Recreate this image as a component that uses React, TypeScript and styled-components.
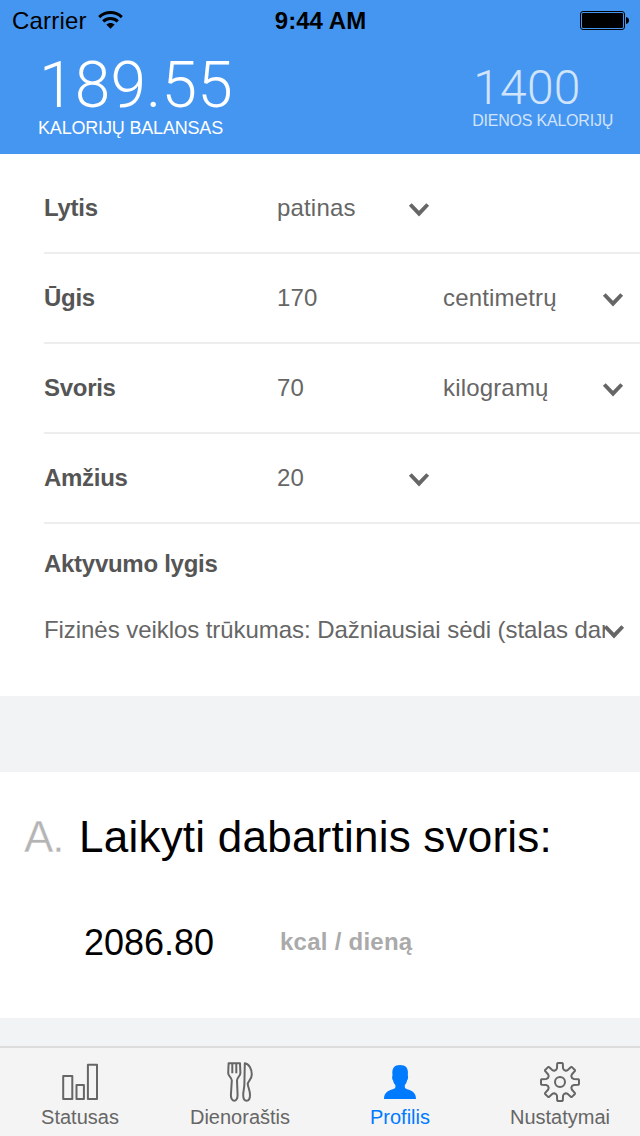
import React from "react";
import styled, { createGlobalStyle } from "styled-components";

const GlobalStyle = createGlobalStyle`
  *, *::before, *::after { box-sizing: border-box; }
  body { margin: 0; background: #f2f3f5; }
`;

const Screen = styled.div`
  display: flex;
  flex-direction: column;
  width: 640px;
  height: 1136px;
  overflow: hidden;
  background: #f2f3f5;
  font-family: "Liberation Sans", Arial, sans-serif;
  color: #666;
`;

const Header = styled.header`
  height: 154px;
  background: #4596f1;
  color: #fff;
`;

const StatusBar = styled.div`
  display: grid;
  grid-template-columns: 1fr auto 1fr;
  align-items: center;
  height: 41px;
  padding: 0 11px 0 12px;
  color: #000;
  font-size: 24px;
  line-height: 40px;
`;

const Carrier = styled.div`
  display: flex;
  align-items: center;
  gap: 11px;
  letter-spacing: 0.2px;
  padding-top: 1px;
`;

const WifiIcon = styled.svg`
  margin-bottom: 2px;
`;

const Clock = styled.div`
  font-weight: 700;
  letter-spacing: 0.05px;
  padding-top: 1px;
`;

const BatteryIcon = styled.svg`
  justify-self: end;
`;

const Totals = styled.div`
  display: flex;
  justify-content: space-between;
  padding: 12px 27px 0 38px;
`;

const Total = styled.div<{ $minor?: boolean }>`
  padding-top: ${(p) => (p.$minor ? 10 : 0)}px;
  opacity: ${(p) => (p.$minor ? 0.75 : 1)};
`;

const TotalValue = styled.div<{ $size: number; $line: number }>`
  padding-left: 1px;
  font-family: Roboto, "Liberation Sans", sans-serif;
  font-size: ${(p) => p.$size}px;
  font-weight: 300;
  line-height: ${(p) => p.$line}px;
  letter-spacing: 0.2px;
`;

const TotalLabel = styled.div<{ $size: number; $line: number; $spacing: number }>`
  font-size: ${(p) => p.$size}px;
  line-height: ${(p) => p.$line}px;
  letter-spacing: ${(p) => p.$spacing}px;
  white-space: nowrap;
`;

const Form = styled.section`
  height: 542px;
  padding: 10px 0 0 44px;
  background: #fff;
  font-size: 24px;
`;

const Row = styled.div`
  display: grid;
  grid-template-columns: 233px 132px 34px 160px 1fr;
  align-items: center;
  height: 90px;
  border-bottom: 2px solid #ededed;
  line-height: 30px;
`;

const FieldName = styled.div`
  color: #555;
  font-weight: 700;
  letter-spacing: -0.28px;
`;

const FieldValue = styled.div`
  letter-spacing: 0.17px;
`;

const Arrow = styled.svg`
  display: block;
  flex: none;
  margin-top: 3px;
  overflow: visible;
`;

const Activity = styled.div`
  padding-top: 25px;
  line-height: 30px;
`;

const ActivitySelect = styled.div`
  display: flex;
  align-items: center;
  margin-top: 36px;
`;

const ActivityText = styled.div`
  width: 561px;
  margin-right: -1px;
  overflow: hidden;
  letter-spacing: -0.06px;
  white-space: nowrap;
`;

const Goal = styled.section`
  height: 246px;
  margin-top: 76px;
  padding: 40px 24px 0;
  background: #fff;
`;

const GoalTitle = styled.h2`
  display: flex;
  margin: 0;
  color: #000;
  font-size: 44px;
  font-weight: 400;
  line-height: 50px;
  white-space: nowrap;
`;

const GoalLetter = styled.span`
  width: 55px;
  color: #b4b4b4;
  letter-spacing: -1px;
  -webkit-text-stroke: 0.4px #fff;
`;

const GoalText = styled.span`
  letter-spacing: 0.23px;
`;

const GoalResult = styled.div`
  display: flex;
  align-items: center;
  margin-top: 59px;
  padding-left: 60px;
  line-height: 42px;
`;

const Kcal = styled.div`
  width: 196px;
  color: #000;
  font-size: 36px;
`;

const Unit = styled.div`
  padding-bottom: 2px;
  color: #aaa;
  font-size: 24px;
  font-weight: 700;
  letter-spacing: 0.25px;
`;

const TabBar = styled.nav`
  display: flex;
  height: 90px;
  margin-top: auto;
  border-top: 2px solid #dcdcdc;
  background: #f4f4f4;
`;

const Tab = styled.div<{ $active?: boolean }>`
  display: flex;
  flex: 1;
  flex-direction: column;
  align-items: center;
  padding-top: 14px;
  color: ${(p) => (p.$active ? "#007aff" : "#666")};
  font-size: 20px;
  line-height: 24px;
`;

const TabLabel = styled.span`
  margin-top: 3px;
`;

const Icon = ({ children }: { children: React.ReactNode }) => (
  <svg width="40" height="40" viewBox="0 0 40 40" fill="none" stroke="currentColor" strokeWidth="2" strokeLinejoin="round">
    {children}
  </svg>
);

const Chevron = () => (
  <Arrow width="20" height="14" viewBox="0 0 20 14" fill="none" stroke="#666" strokeWidth="3.9">
    <path d="M1.3 1.5 10 10.6 18.7 1.5" />
  </Arrow>
);

/* Closed outline of the eight-toothed settings gear. */
const gearPath = (() => {
  const pts: string[] = [];
  for (let i = 0; i < 8; i++) {
    const base = (i * Math.PI) / 4 - Math.PI / 2;
    [
      [12.7, -0.31],
      [14, -0.22],
      [18.6, -0.15],
      [19.1, -0.11],
      [19.1, 0.11],
      [18.6, 0.15],
      [14, 0.22],
      [12.7, 0.31],
    ].forEach(([r, a]) => {
      pts.push(`${(20 + r * Math.cos(base + a)).toFixed(2)} ${(20 + r * Math.sin(base + a)).toFixed(2)}`);
    });
  }
  return `M${pts.join("L")}Z`;
})();

export default function App() {
  return (
    <Screen>
      <GlobalStyle />
      <Header>
        <StatusBar>
          <Carrier>
            <span>Carrier</span>
            <WifiIcon width="25" height="18" viewBox="0 0 25 18" fill="none" stroke="#000" strokeWidth="3">
              <path d="M1.2 6.1C7.6.1 17.4.1 23.8 6.1" />
              <path d="M5.2 10.3C9.4 6.4 15.6 6.4 19.8 10.3" />
              <path d="M8.3 13.6C10.6 11.3 14.4 11.3 16.7 13.6L12.5 17.8Z" fill="#000" stroke="none" />
            </WifiIcon>
          </Carrier>
          <Clock>9:44 AM</Clock>
          <BatteryIcon width="49" height="19" viewBox="0 0 49 19">
            <rect x=".5" y=".5" width="44" height="18" rx="2.5" fill="none" stroke="#000" />
            <rect x="2" y="2" width="41" height="15" rx="1.2" />
            <path d="M46 6C48 6.4 49 7.6 49 9.5S48 12.6 46 13Z" />
          </BatteryIcon>
        </StatusBar>
        <Totals>
          <Total>
            <TotalValue $size={64} $line={65}>189.55</TotalValue>
            <TotalLabel $size={18} $line={20} $spacing={-0.18}>KALORIJŲ BALANSAS</TotalLabel>
          </Total>
          <Total $minor>
            <TotalValue $size={48} $line={49}>1400</TotalValue>
            <TotalLabel $size={16} $line={18} $spacing={-0.22}>DIENOS KALORIJŲ</TotalLabel>
          </Total>
        </Totals>
      </Header>

      <Form>
        <Row>
          <FieldName>Lytis</FieldName>
          <FieldValue>patinas</FieldValue>
          <Chevron />
        </Row>
        <Row>
          <FieldName>Ūgis</FieldName>
          <FieldValue>170</FieldValue>
          <span />
          <FieldValue>centimetrų</FieldValue>
          <Chevron />
        </Row>
        <Row>
          <FieldName>Svoris</FieldName>
          <FieldValue>70</FieldValue>
          <span />
          <FieldValue>kilogramų</FieldValue>
          <Chevron />
        </Row>
        <Row>
          <FieldName>Amžius</FieldName>
          <FieldValue>20</FieldValue>
          <Chevron />
        </Row>
        <Activity>
          <FieldName>Aktyvumo lygis</FieldName>
          <ActivitySelect>
            <ActivityText>Fizinės veiklos trūkumas: Dažniausiai sėdi (stalas darbas)</ActivityText>
            <Chevron />
          </ActivitySelect>
        </Activity>
      </Form>

      <Goal>
        <GoalTitle>
          <GoalLetter>A.</GoalLetter>
          <GoalText>Laikyti dabartinis svoris:</GoalText>
        </GoalTitle>
        <GoalResult>
          <Kcal>2086.80</Kcal>
          <Unit>kcal / dieną</Unit>
        </GoalResult>
      </Goal>

      <TabBar>
        <Tab>
          <Icon>
            <rect x="3.2" y="14.1" width="9.1" height="22.9" />
            <rect x="16.5" y="22.9" width="7.4" height="14.1" />
            <rect x="27.9" y="2.8" width="9.1" height="34.2" />
          </Icon>
          <TabLabel>Statusas</TabLabel>
        </Tab>
        <Tab>
          <Icon>
            <path d="M8.6 1.2H20L20.4 11C20.4 14.5 16.9 15.2 17 18.5L17.6 33C17.8 40.5 10.7 40.5 10.9 33L11.8 18.5C11.9 15.2 8.1 14.5 8.2 11ZM12.3 1V11.2M16.3 1V11.2" />
            <path d="M24.8 1.2C29 1.7 31.8 7 31.8 12.5C31.8 18 27.3 19 27.8 22.5C28.1 25.5 30 28 30 33C30 40.7 23.2 40.7 23.2 33C23.2 29 24.4 26 24.4 21.5Z" />
          </Icon>
          <TabLabel>Dienoraštis</TabLabel>
        </Tab>
        <Tab $active>
          <Icon>
            <path
              stroke="none"
              fill="currentColor"
              d="M4 37C4 31 7.6 29 12 27.6C14.2 26.9 15.4 26.3 15.4 25V23C14 21.8 13.4 20.4 13.1 18.6C12 17.6 11.9 14.6 12.5 13.2C11.6 6 14.4 3 20 3C25.6 3 28.8 5.6 27.8 13.2C28.4 14.6 28.1 17.6 27 18.6C26.7 20.4 26.1 21.8 24.8 23V25C24.8 26.3 26 26.9 28 27.6C32.4 29 36 31 36 37Z"
            />
          </Icon>
          <TabLabel>Profilis</TabLabel>
        </Tab>
        <Tab>
          <Icon>
            <path d={gearPath} />
            <circle cx="20" cy="20" r="5" />
          </Icon>
          <TabLabel>Nustatymai</TabLabel>
        </Tab>
      </TabBar>
    </Screen>
  );
}
